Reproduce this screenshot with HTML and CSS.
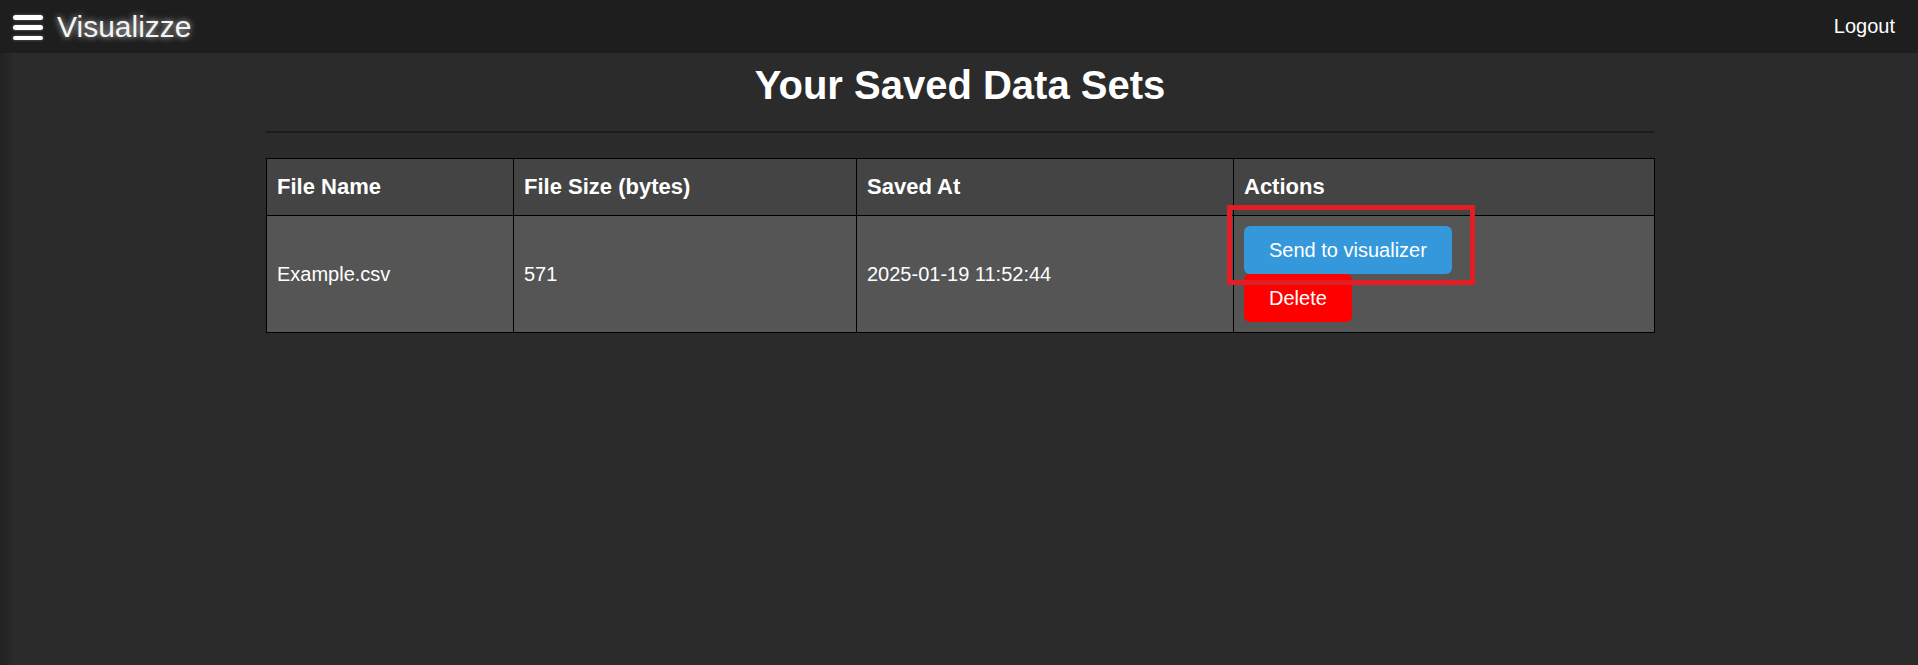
FILE: index.html
```html
<!DOCTYPE html>
<html lang="en">
<head>
<meta charset="utf-8">
<title>Visualizze - Saved Data Sets</title>
<link rel="stylesheet" href="styles.css">
</head>
<body>
<header class="topbar">
  <div class="brand">
    <span class="burger" aria-label="Menu"><span></span><span></span><span></span></span>
    <span class="brand-name">Visualizze</span>
  </div>
  <a class="logout" href="#">Logout</a>
</header>
<main class="main">
  <div class="container">
    <h1 class="title">Your Saved Data Sets</h1>
    <hr class="divider">
    <table class="data-table">
      <colgroup>
        <col class="c-name">
        <col class="c-size">
        <col class="c-saved">
        <col class="c-actions">
      </colgroup>
      <thead>
        <tr>
          <th>File Name</th>
          <th>File Size (bytes)</th>
          <th>Saved At</th>
          <th>Actions</th>
        </tr>
      </thead>
      <tbody>
        <tr>
          <td>Example.csv</td>
          <td>571</td>
          <td>2025-01-19 11:52:44</td>
          <td class="actions">
            <div class="btn-stack">
              <button class="btn btn-send">Send to visualizer</button>
              <button class="btn btn-delete">Delete</button>
              <span class="highlight"></span>
            </div>
          </td>
        </tr>
      </tbody>
    </table>
  </div>
</main>
</body>
</html>
```
FILE: styles.css
```css
html, body {
  margin: 0;
  padding: 0;
  height: 100%;
}
body {
  font-family: "Liberation Sans", Arial, sans-serif;
  background: #2b2b2b;
  color: #fff;
  display: flex;
  flex-direction: column;
}
.topbar {
  height: 53px;
  flex: 0 0 53px;
  background: #1e1e1e;
  display: flex;
  align-items: center;
  justify-content: space-between;
  padding: 0 23px 0 13px;
}
.brand {
  display: flex;
  align-items: center;
  gap: 14px;
}
.burger {
  width: 30px;
  height: 25px;
  display: flex;
  flex-direction: column;
  justify-content: space-between;
  margin-top: 2px;
}
.burger span {
  display: block;
  height: 4.5px;
  border-radius: 3px;
  background: #fff;
  box-shadow: 0 0 3px rgba(255,255,255,0.35);
}
.brand-name {
  font-size: 30px;
  color: #f4f4f4;
  text-shadow: 0 0 6px rgba(255,255,255,0.75);
}
.logout {
  font-size: 20px;
  color: #fff;
  text-decoration: none;
}
.main {
  flex: 1;
  background: linear-gradient(to right, #222 0, #252525 6px, #282828 10px, #2b2b2b 14px);
  padding-top: 9px;
  padding-left: 2px;
}
.container {
  width: 1388px;
  margin: 0 auto;
}
.title {
  margin: 0;
  font-size: 40px;
  font-weight: bold;
  text-align: center;
  color: #fff;
  line-height: 46px;
}
.divider {
  margin: 23px 0 0;
  border: 0;
  height: 2px;
  background: #1c1c1c;
}
.data-table {
  margin-top: 25px;
  width: 1388px;
  border-collapse: collapse;
  table-layout: fixed;
}
.c-name { width: 247px; }
.c-size { width: 343px; }
.c-saved { width: 377px; }
.c-actions { width: 421px; }
.data-table th,
.data-table td {
  border: 1px solid #000;
  text-align: left;
  color: #fff;
}
.data-table th {
  background: #444;
  font-size: 22px;
  font-weight: bold;
  padding: 15px 10px;
}
.data-table td {
  background: #555;
  font-size: 20px;
  padding: 10px;
}
.btn-stack {
  position: relative;
  display: flex;
  flex-direction: column;
  align-items: flex-start;
}
.btn {
  font-family: "Liberation Sans", Arial, sans-serif;
  font-size: 20px;
  line-height: 23px;
  color: #fff;
  border: 0;
  border-radius: 6px;
  padding: 12.5px 25px;
  margin: 0;
}
.btn-send { background: #3498db; }
.btn-delete { background: #ff0000; }
.highlight {
  position: absolute;
  left: -17px;
  top: -21px;
  width: 248px;
  height: 80px;
  box-sizing: border-box;
  border: 5px solid #e21e24;
  pointer-events: none;
}
```
